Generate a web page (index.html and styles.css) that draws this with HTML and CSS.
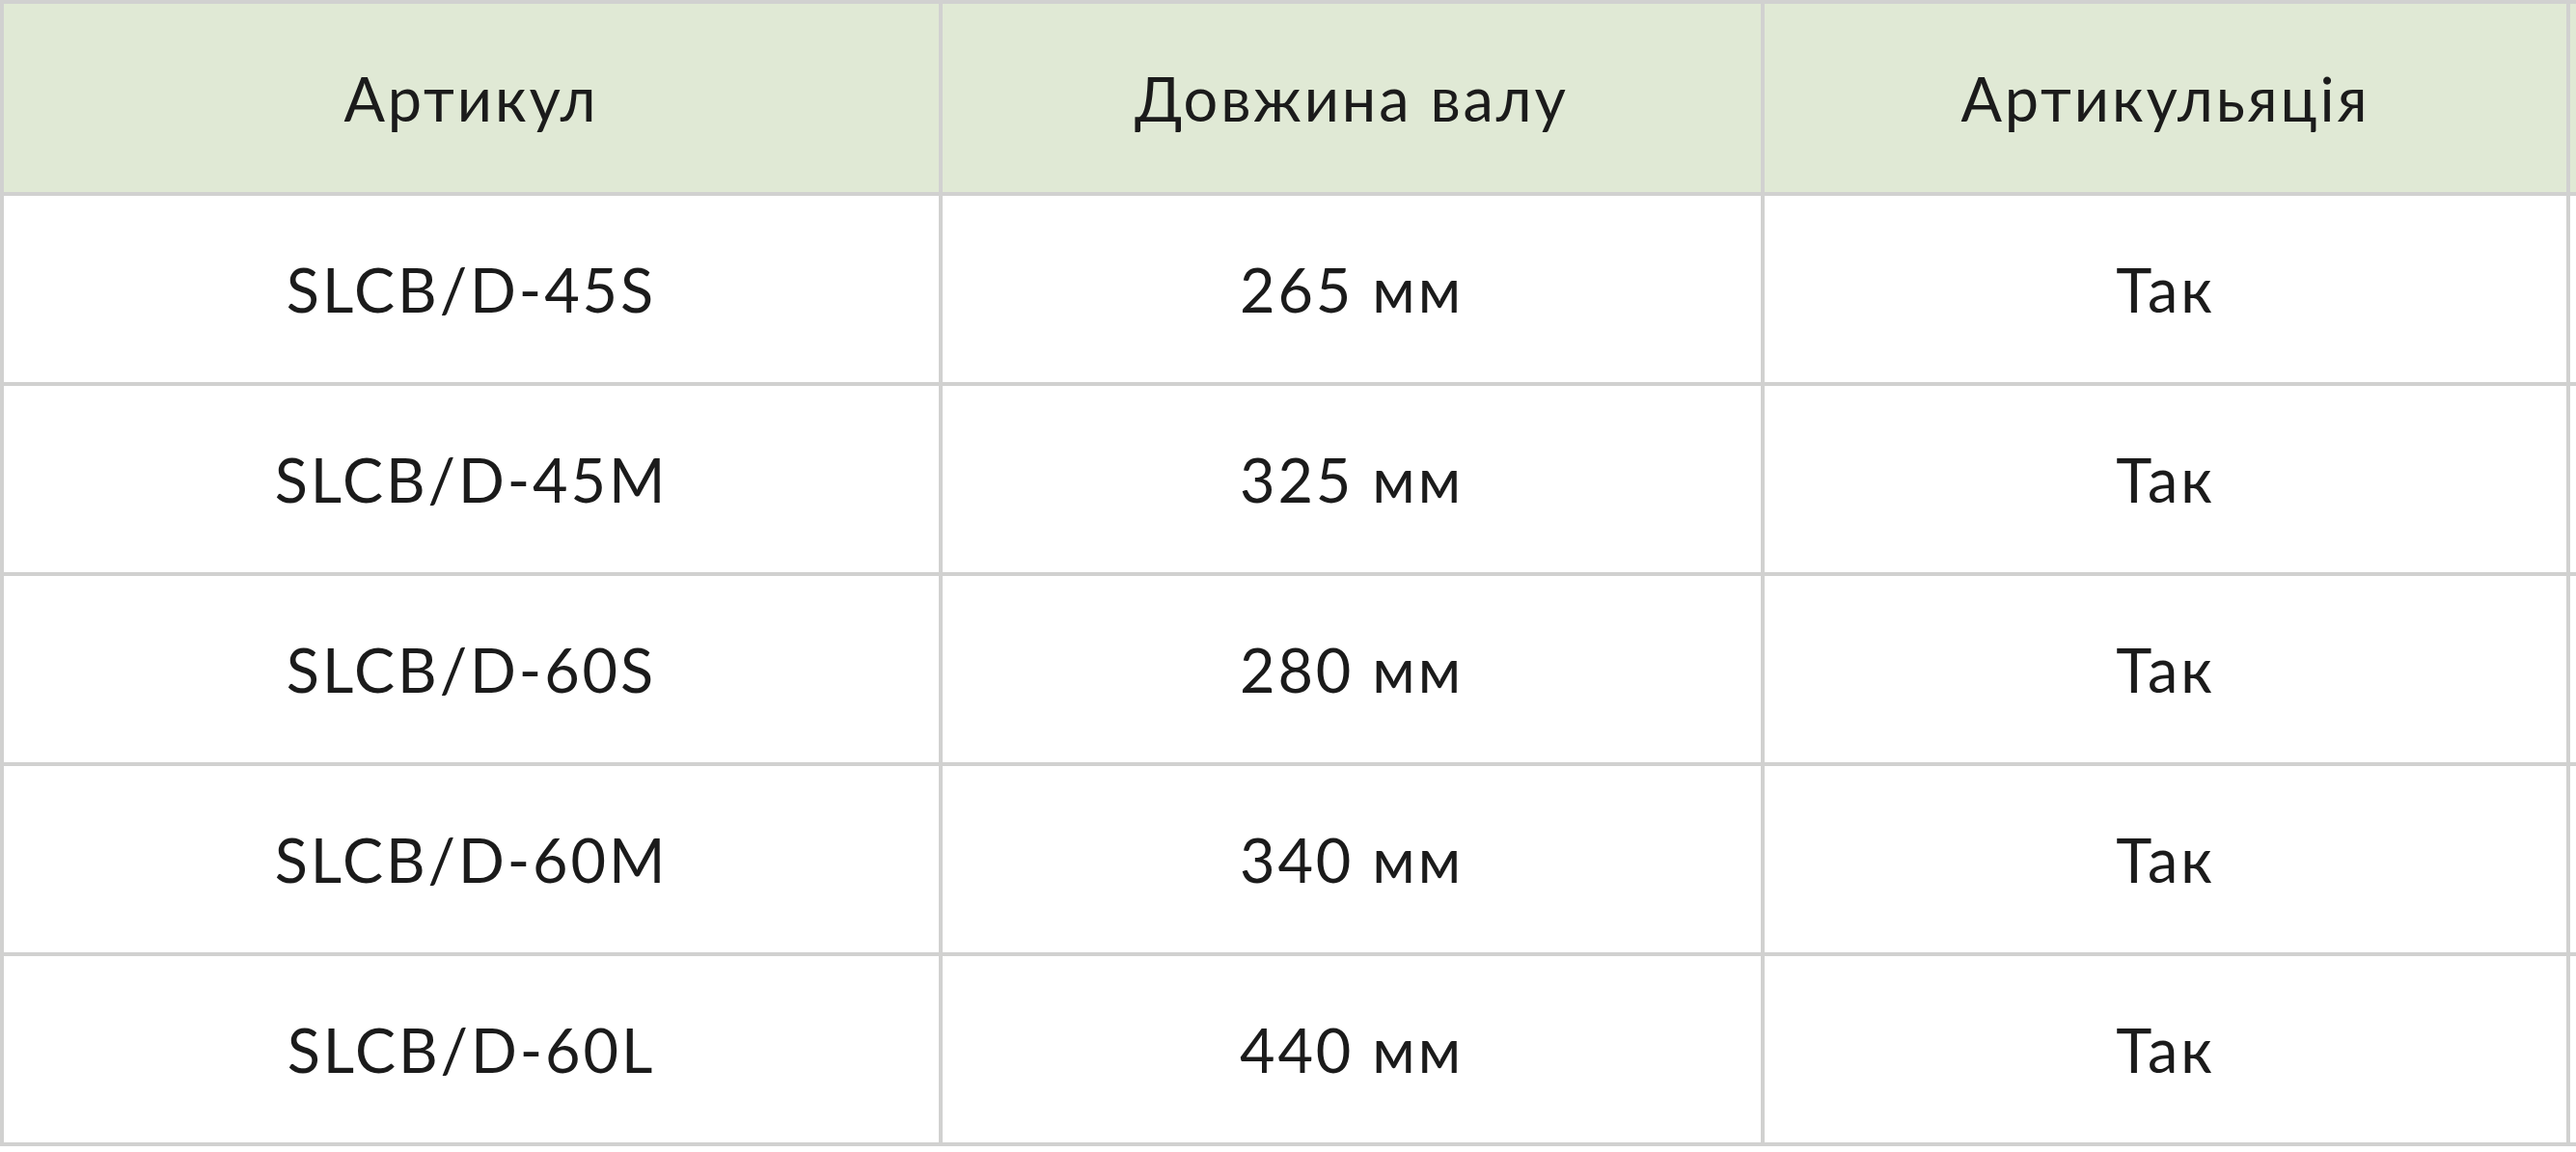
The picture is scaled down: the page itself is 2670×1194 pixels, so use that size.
FILE: index.html
```html
<!DOCTYPE html>
<html lang="uk">
<head>
<meta charset="utf-8">
<title>Таблиця</title>
<link rel="stylesheet" href="styles.css">
</head>
<body>
<div class="wrap">
<table class="spec">
  <colgroup>
    <col class="c1"><col class="c2"><col class="c3"><col class="c4">
  </colgroup>
  <thead>
    <tr><th>Артикул</th><th>Довжина валу</th><th>Артикульяція</th><th></th></tr>
  </thead>
  <tbody>
    <tr><td>SLCB/D-45S</td><td>265 мм</td><td>Так</td><td></td></tr>
    <tr><td>SLCB/D-45M</td><td>325 мм</td><td>Так</td><td></td></tr>
    <tr><td>SLCB/D-60S</td><td>280 мм</td><td>Так</td><td></td></tr>
    <tr><td>SLCB/D-60M</td><td>340 мм</td><td>Так</td><td></td></tr>
    <tr><td>SLCB/D-60L</td><td>440 мм</td><td>Так</td><td></td></tr>
  </tbody>
</table>
</div>
</body>
</html>
```

FILE: styles.css
```css
html, body {
  margin: 0;
  padding: 0;
  background: #ffffff;
  overflow: hidden;
}
.wrap {
  width: 2670px;
  overflow: hidden;
}
.spec {
  width: 3468px;
  border-collapse: separate;
  border-spacing: 4px;
  background: #d1d1d0;
  table-layout: fixed;
  font-family: "Lato", "Noto Sans", sans-serif;
  font-size: 63px;
  letter-spacing: 2.9px;
  color: #1b1b1b;
}
.spec .c1 { width: 969px; }
.spec .c2 { width: 848px; }
.spec .c3 { width: 831px; }
.spec .c4 { width: 800px; }
.spec th, .spec td {
  padding: 0;
  text-align: center;
  vertical-align: middle;
  font-weight: 400;
}
.spec th {
  background: #e0e9d5;
  height: 195px;
}
.spec td {
  background: #ffffff;
  height: 193px;
}
```
